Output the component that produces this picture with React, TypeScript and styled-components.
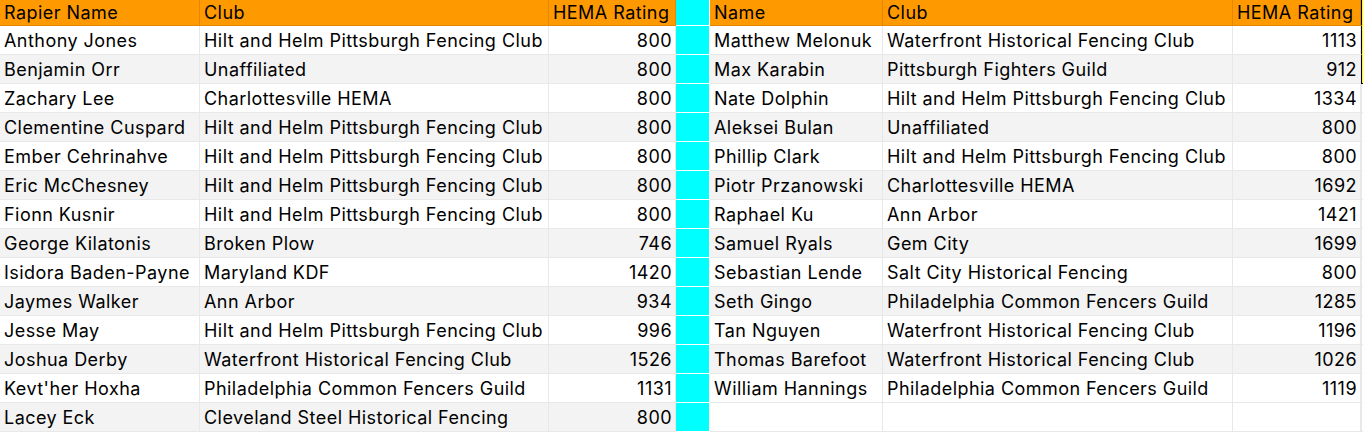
import React from 'react';
import styled, { createGlobalStyle, css } from 'styled-components';

type Entry = [string, string, number];

const leftRows: Entry[] = [
    ['Anthony Jones', 'Hilt and Helm Pittsburgh Fencing Club', 800],
    ['Benjamin Orr', 'Unaffiliated', 800],
    ['Zachary Lee', 'Charlottesville HEMA', 800],
    ['Clementine Cuspard', 'Hilt and Helm Pittsburgh Fencing Club', 800],
    ['Ember Cehrinahve', 'Hilt and Helm Pittsburgh Fencing Club', 800],
    ['Eric McChesney', 'Hilt and Helm Pittsburgh Fencing Club', 800],
    ['Fionn Kusnir', 'Hilt and Helm Pittsburgh Fencing Club', 800],
    ['George Kilatonis', 'Broken Plow', 746],
    ['Isidora Baden-Payne', 'Maryland KDF', 1420],
    ['Jaymes Walker', 'Ann Arbor', 934],
    ['Jesse May', 'Hilt and Helm Pittsburgh Fencing Club', 996],
    ['Joshua Derby', 'Waterfront Historical Fencing Club', 1526],
    ["Kevt'her Hoxha", 'Philadelphia Common Fencers Guild', 1131],
    ['Lacey Eck', 'Cleveland Steel Historical Fencing', 800],
];

const rightRows: Entry[] = [
    ['Matthew Melonuk', 'Waterfront Historical Fencing Club', 1113],
    ['Max Karabin', 'Pittsburgh Fighters Guild', 912],
    ['Nate Dolphin', 'Hilt and Helm Pittsburgh Fencing Club', 1334],
    ['Aleksei Bulan', 'Unaffiliated', 800],
    ['Phillip Clark', 'Hilt and Helm Pittsburgh Fencing Club', 800],
    ['Piotr Przanowski', 'Charlottesville HEMA', 1692],
    ['Raphael Ku', 'Ann Arbor', 1421],
    ['Samuel Ryals', 'Gem City', 1699],
    ['Sebastian Lende', 'Salt City Historical Fencing', 800],
    ['Seth Gingo', 'Philadelphia Common Fencers Guild', 1285],
    ['Tan Nguyen', 'Waterfront Historical Fencing Club', 1196],
    ['Thomas Barefoot', 'Waterfront Historical Fencing Club', 1026],
    ['William Hannings', 'Philadelphia Common Fencers Guild', 1119],
];

const GlobalStyle = createGlobalStyle`
    html, body {
        margin: 0;
        padding: 0;
        background: #ffffff;
        overflow: hidden;
    }
    body {
        font-family: Inter, 'Liberation Sans', sans-serif;
        color: #000000;
    }
`;

const Sheet = styled.div`
    display: grid;
    grid-template-columns: 200px 349px 127px 34px 173px 350px 128px 1fr;
    grid-template-rows: 26px;
    grid-auto-rows: 29px;
    width: 1363px;
    height: 432px;
`;

type Tone = 'header' | 'white' | 'band' | 'cyan';

const toneStyles: Record<Tone, ReturnType<typeof css>> = {
    header: css`
        background: #ff9900;
        border-color: #e38800;
        padding-top: 0;
        padding-bottom: 1px;
    `,
    white: css`
        background: #ffffff;
        border-color: #e8e8e8;
    `,
    band: css`
        background: #f3f3f3;
        border-color: #e8e8e8;
    `,
    cyan: css`
        background: #00ffff;
        border-color: #ffffff;
    `,
};

const Cell = styled.div<{ $tone: Tone; $num?: boolean }>`
    box-sizing: border-box;
    display: flex;
    align-items: center;
    justify-content: ${(p) => (p.$num ? 'flex-end' : 'flex-start')};
    padding: 1px 3px 0 4px;
    border-right: 1px solid;
    border-bottom: 1px solid;
    font-size: 18px;
    letter-spacing: 0.45px;
    white-space: nowrap;
    overflow: hidden;
    ${(p) => toneStyles[p.$tone]}
`;

// column H: yellow fill with a black selection edge over the first three rows
const EdgeCell = styled.div<{ $marked: boolean; $last: boolean }>`
    box-sizing: border-box;
    background: ${(p) => (p.$marked ? '#ffff00' : '#ffffff')};
    border-left: 1px solid ${(p) => (p.$marked ? '#000000' : '#e8e8e8')};
    border-bottom: 1px solid ${(p) => (p.$last ? '#000000' : p.$marked ? '#ffff00' : '#e8e8e8')};
`;

const App = () => {
    const rows = Array.from({ length: 14 }, (_, i) => i);

    return (
        <>
            <GlobalStyle />
            <Sheet>
                <Cell $tone="header">Rapier Name</Cell>
                <Cell $tone="header">Club</Cell>
                <Cell $tone="header">HEMA Rating</Cell>
                <Cell $tone="cyan" />
                <Cell $tone="header">Name</Cell>
                <Cell $tone="header">Club</Cell>
                <Cell $tone="header">HEMA Rating</Cell>
                <EdgeCell $marked $last={false} />

                {rows.map((i) => {
                    const left = leftRows[i];
                    const right = rightRows[i];
                    const tone: Tone = i % 2 === 1 ? 'band' : 'white';
                    const rightTone: Tone = right ? tone : 'white';
                    return (
                        <React.Fragment key={i}>
                            <Cell $tone={tone}>{left[0]}</Cell>
                            <Cell $tone={tone}>{left[1]}</Cell>
                            <Cell $tone={tone} $num>
                                {left[2]}
                            </Cell>
                            <Cell $tone="cyan" />
                            <Cell $tone={rightTone}>{right ? right[0] : ''}</Cell>
                            <Cell $tone={rightTone}>{right ? right[1] : ''}</Cell>
                            <Cell $tone={rightTone} $num>
                                {right ? right[2] : ''}
                            </Cell>
                            <EdgeCell $marked={i < 2} $last={i === 1} />
                        </React.Fragment>
                    );
                })}
            </Sheet>
        </>
    );
};

export default App;
